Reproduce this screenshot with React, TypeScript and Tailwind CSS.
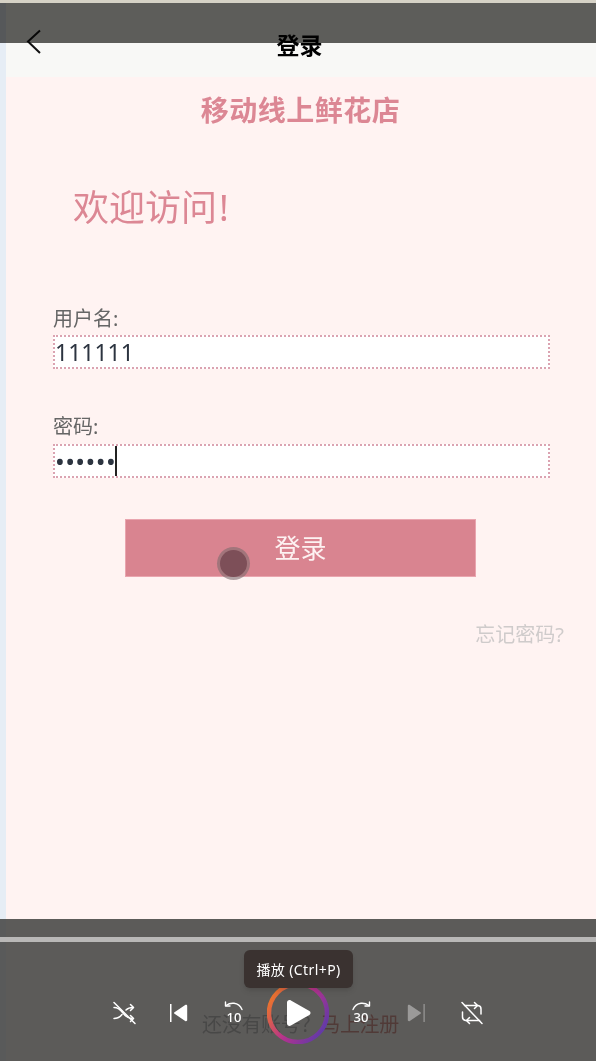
import React from 'react';

const cjk = { fontFamily: '"Noto Sans", "Noto Sans CJK SC", sans-serif' };

function Shuffle() {
  return (
    <svg width="24" height="24" viewBox="0 0 24 24" fill="none" stroke="white" strokeWidth="1.5" strokeLinecap="round" strokeLinejoin="round">
      <path d="M2 6.500c4 0 6 1.500 9 5.500s5 5.500 9 5.500" />
      <path d="M2 17.500c4 0 6-1.500 8-4M14 9c1.500-1.500 3.500-2.500 7-2.500" />
      <path d="M18.500 3.500l3 3-3 3M18.500 14.500l3 3-3 3" />
      <path d="M2 1.500l21 21" />
    </svg>
  );
}

function Repeat() {
  return (
    <svg width="24" height="24" viewBox="0 0 24 24" fill="none" stroke="white" strokeWidth="1.5" strokeLinecap="round" strokeLinejoin="round">
      <path d="M4.500 4.500h13.500a3.500 3.500 0 0 1 3 3.500v5" />
      <path d="M19.500 19.500h-14a3.500 3.500 0 0 1-3-3.500v-5" />
      <path d="M14.500 1.500l3 3-3 3M9.500 16.500l-3 3 3 3" />
      <path d="M2 1.500l20 21" />
    </svg>
  );
}

function SkipBack() {
  return (
    <svg width="20" height="20" viewBox="0 0 20 20" fill="white">
      <rect x="1" y="1" width="1.500" height="18" />
      <path d="M17 1.800c.8 0 1.200.5 1.200 1.200v14c0 .7-.4 1.200-1.200 1.200-.3 0-.6-.1-.8-.3L5.500 10.800c-.6-.4-.6-1.200 0-1.600L16.200 2.100c.2-.2.500-.3.800-.3z" />
    </svg>
  );
}

function SkipForward() {
  return (
    <svg width="20" height="20" viewBox="0 0 20 20" fill="#9b9a99">
      <rect x="17.500" y="1" width="1.200" height="18" />
      <path d="M3 1.800c-.8 0-1.200.5-1.200 1.200v14c0 .7.4 1.200 1.200 1.200.3 0 .6-.1.800-.3l10.700-7.100c.6-.4.6-1.200 0-1.600L3.800 2.100c-.2-.2-.5-.3-.8-.3z" />
    </svg>
  );
}

function SeekButton({ label, flip }: { label: string; flip?: boolean }) {
  return (
    <div className="relative h-[24px] w-[24px]">
      <svg width="24" height="24" viewBox="0 0 24 24" fill="none" stroke="white" strokeWidth="1.400" strokeLinecap="round" strokeLinejoin="round" className={flip ? '-scale-x-100' : ''}>
        <path d="M4 4.500c2.500-1.800 5-2.500 8-2.200 3.500.4 6.500 2.700 8 6.200" />
        <path d="M3.500 1v4h4.500" />
      </svg>
      <span className="absolute left-0 top-[8px] w-full text-center text-[13px] leading-[16px] font-medium text-white" style={cjk}>
        {label}
      </span>
    </div>
  );
}

function PlayRing() {
  return (
    <div className="relative flex h-[62px] w-[62px] items-center justify-center">
      <svg width="62" height="62" viewBox="0 0 62 62" fill="none" className="absolute inset-0">
        <defs>
          <linearGradient id="ring" x1="0" y1="0.1" x2="1" y2="0.75">
            <stop offset="0" stopColor="#f5801a" />
            <stop offset="0.55" stopColor="#b5328e" />
            <stop offset="1" stopColor="#5f3aa8" />
          </linearGradient>
        </defs>
        <circle cx="31" cy="31" r="29" stroke="url(#ring)" strokeWidth="4.500" />
      </svg>
      <svg width="26" height="28" viewBox="0 0 26 28" fill="white" className="relative ml-[2px]">
        <path d="M3.500 1c.5 0 1 .1 1.400.4l18.500 10.700c1.500.9 1.500 3 0 3.800L4.900 26.600C3.200 27.600 1 26.400 1 24.400V3.500C1 2 2.100 1 3.500 1z" />
      </svg>
    </div>
  );
}

export default function App() {
  return (
    <div className="relative flex h-[1061px] w-[596px] flex-col overflow-hidden bg-[#e6edf5]" style={cjk}>
      <div className="flex flex-1 pl-[6px] pr-[2px]">
        <div className="flex flex-1 flex-col bg-[#fff3f2]">
          <header className="relative flex h-[77px] items-center justify-center bg-[#f8f8f6] pt-[13px] pr-[4px]">
            <svg width="18" height="28" viewBox="0 0 18 28" fill="none" stroke="#111" strokeWidth="2" className="absolute left-[20px] top-[28px]">
              <path d="M14 2.500L2 13.500l12 11.500" />
            </svg>
            <h1 className="text-[23px] leading-[30px] font-bold text-black">登录</h1>
          </header>

          <p className="mt-[14px] pr-[2px] text-center text-[28px] leading-[38px] font-bold tracking-[0.5px] text-[#dc8794]">移动线上鲜花店</p>
          <p className="mt-[55px] pl-[67px] text-[36px] leading-[48px] text-[#dc8794]">
            欢迎访问<span className="ml-[2px]">!</span>
          </p>

          <form className="mt-[73px] flex flex-col px-[47px]">
            <label className="text-[20px] leading-[28px] text-[#666]">用户名:</label>
            <div className="mt-[2px] flex h-[34px] w-[497px] items-center border-2 border-dotted border-[#dba3b1] bg-white text-[23px] text-[#2c3440]">
              111111
            </div>
            <label className="mt-[44px] text-[20px] leading-[28px] text-[#666]">密码:</label>
            <div className="mt-[3px] flex h-[34px] w-[497px] items-center border-2 border-dotted border-[#dba3b1] bg-white">
              <span className="text-[26px] leading-[28px] tracking-[0.4px] text-[#2c3440]">••••••</span>
              <span className="ml-[-1px] h-[30px] w-[2px] bg-[#222]" />
            </div>
            <button type="button" className="mt-[41px] ml-[72px] h-[58px] w-[351px] border border-[#e9a5af] bg-[#d98490] text-[26px] text-[#fdf2f2]">
              登录
            </button>
          </form>

          <a className="mt-[44px] self-end pr-[33px] text-[20px] leading-[28px] text-[#cfcbcb]">忘记密码?</a>

          <p className="mt-auto mb-[22px] pr-[2px] text-center text-[20px] leading-[28px] tracking-[-0.3px] text-[#777]">
            还没有账号？<span className="text-[#b02010]">马上注册</span>
          </p>
        </div>
      </div>

      {/* pointer marker on the login button */}
      <div className="absolute left-[217px] top-[547px] flex h-[33px] w-[33px] items-center justify-center rounded-full bg-[#7d6a6e]/60">
        <div className="h-[27px] w-[27px] rounded-full bg-[#7d4f58]" />
      </div>

      {/* top overlay */}
      <div className="absolute inset-x-0 top-0 h-[3px] bg-[#d6d2c6]" />
      <div className="absolute inset-x-0 top-[3px] h-[40px] bg-[#5f5f5d] mix-blend-multiply" />

      {/* bottom player overlay */}
      <div className="absolute inset-x-0 bottom-0 h-[142px] bg-[#403f3e]/85">
        <div className="mt-[18px] h-[5px] bg-[#b9b8b7]" />
        <div className="relative mt-[40px] flex h-[62px] items-center pl-[112px]">
          <div className="flex w-[24px] justify-center"><Shuffle /></div>
          <div className="ml-[33px] flex w-[20px] justify-center"><SkipBack /></div>
          <div className="ml-[33px]"><SeekButton label="10" /></div>
          <div className="ml-[21px]"><PlayRing /></div>
          <div className="ml-[20px]"><SeekButton label="30" flip /></div>
          <div className="ml-[33px]"><SkipForward /></div>
          <div className="ml-[34px]"><Repeat /></div>
        </div>
        <div className="absolute left-[244px] top-[31px] flex h-[38px] w-[109px] items-center justify-center rounded-[6px] bg-[#3a3230] text-[14px] tracking-[0.4px] text-white shadow-md">
          播放 (Ctrl+P)
        </div>
      </div>
    </div>
  );
}
